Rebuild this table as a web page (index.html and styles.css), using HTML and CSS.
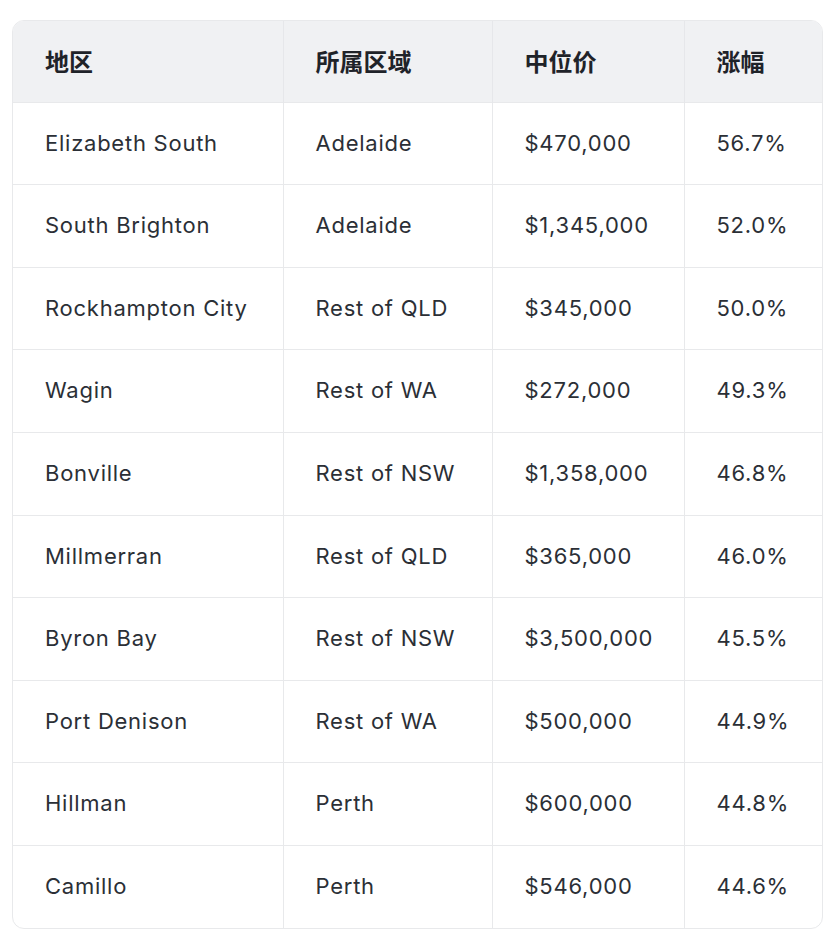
FILE: index.html
```html
<!DOCTYPE html>
<html lang="zh-CN">
<head>
<meta charset="utf-8">
<link rel="stylesheet" href="styles.css">
</head>
<body>
<div class="page">
  <div class="table-wrap">
    <table class="data">
      <colgroup>
        <col class="c1"><col class="c2"><col class="c3"><col class="c4">
      </colgroup>
      <thead>
        <tr><th>地区</th><th>所属区域</th><th>中位价</th><th>涨幅</th></tr>
      </thead>
      <tbody>
        <tr><td>Elizabeth South</td><td>Adelaide</td><td>$470,000</td><td>56.7%</td></tr>
        <tr><td>South Brighton</td><td>Adelaide</td><td>$1,345,000</td><td>52.0%</td></tr>
        <tr><td>Rockhampton City</td><td>Rest of QLD</td><td>$345,000</td><td>50.0%</td></tr>
        <tr><td>Wagin</td><td>Rest of WA</td><td>$272,000</td><td>49.3%</td></tr>
        <tr><td>Bonville</td><td>Rest of NSW</td><td>$1,358,000</td><td>46.8%</td></tr>
        <tr><td>Millmerran</td><td>Rest of QLD</td><td>$365,000</td><td>46.0%</td></tr>
        <tr><td>Byron Bay</td><td>Rest of NSW</td><td>$3,500,000</td><td>45.5%</td></tr>
        <tr><td>Port Denison</td><td>Rest of WA</td><td>$500,000</td><td>44.9%</td></tr>
        <tr><td>Hillman</td><td>Perth</td><td>$600,000</td><td>44.8%</td></tr>
        <tr><td>Camillo</td><td>Perth</td><td>$546,000</td><td>44.6%</td></tr>
      </tbody>
    </table>
  </div>
</div>
</body>
</html>
```

FILE: styles.css
```css
html, body {
  margin: 0;
  padding: 0;
  background: #ffffff;
}
.page {
  padding: 20px 13px 0 12px;
  font-family: Inter, "Noto Sans CJK SC", sans-serif;
  color: #2b2f36;
}
.table-wrap {
  border: 1px solid #e8e9eb;
  border-radius: 12px;
  overflow: hidden;
}
.data {
  width: 100%;
  border-collapse: collapse;
  table-layout: fixed;
}
.c1 { width: 270px; }
.c2 { width: 209px; }
.c3 { width: 192px; }
.c4 { width: auto; }
.data th,
.data td {
  text-align: left;
  padding: 26px 0 26px 32px;
  font-size: 22px;
  line-height: 29.6px;
  white-space: nowrap;
  border-left: 1px solid #e8e9eb;
}
.data th:first-child,
.data td:first-child {
  border-left: none;
}
.data th {
  background: #f0f1f3;
  font-family: "Noto Sans CJK SC", sans-serif;
  font-size: 24px;
  font-weight: 700;
  color: #1f2329;
  padding-top: 25px;
  padding-bottom: 26px;
  border-left-color: #e6e7ea;
}
.data tbody td {
  border-top: 1px solid #e8e9eb;
  font-weight: 400;
  letter-spacing: 0.75px;
}
```
